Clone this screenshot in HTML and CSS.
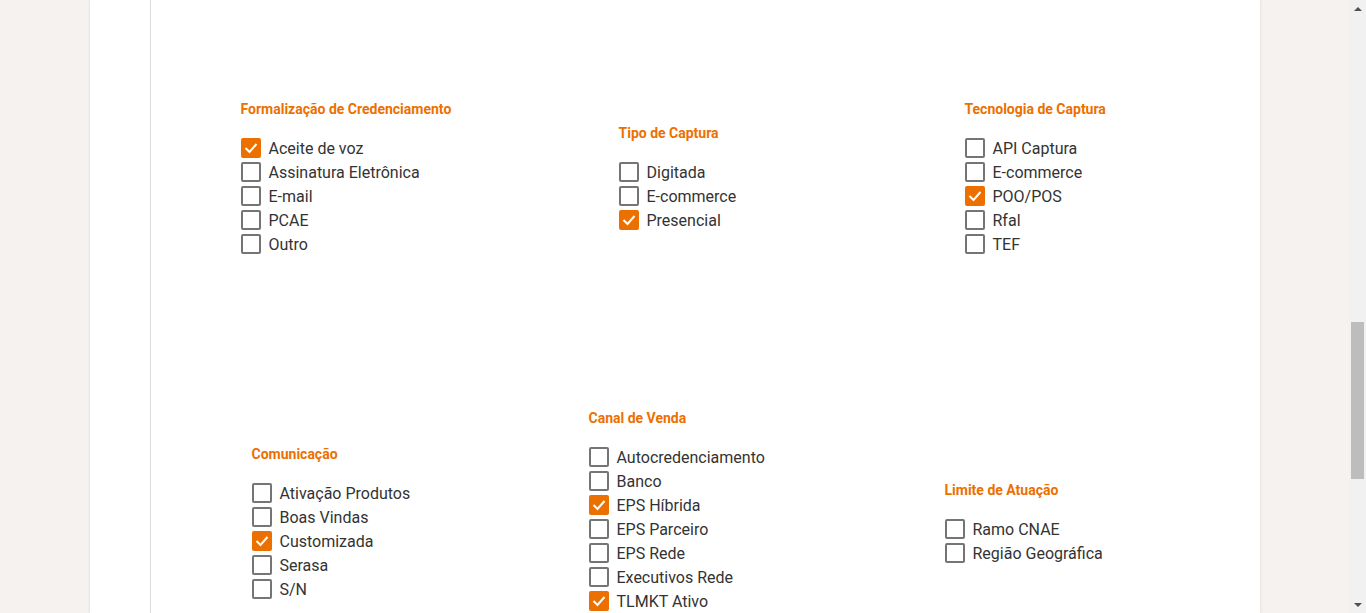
FILE: index.html
```html
<!DOCTYPE html>
<html lang="pt-BR">
<head>
<meta charset="utf-8">
<title>Filtros</title>
<link rel="stylesheet" href="styles.css">
</head>
<body>
<div class="screen">
  <div class="viewport">
    <div class="panel">
      <div class="rail"></div>
      <div class="content">
        <div class="row row-top">
          <div class="group">
            <div class="group-title">Formalização de Credenciamento</div>
            <label class="opt"><span class="box checked"><svg viewBox="0 0 20 20"><polyline points="4.5,10 8.5,14 15.5,6"/></svg></span>Aceite de voz</label>
            <label class="opt"><span class="box"></span>Assinatura Eletrônica</label>
            <label class="opt"><span class="box"></span>E-mail</label>
            <label class="opt"><span class="box"></span>PCAE</label>
            <label class="opt"><span class="box"></span>Outro</label>
          </div>
          <div class="group">
            <div class="group-title">Tipo de Captura</div>
            <label class="opt"><span class="box"></span>Digitada</label>
            <label class="opt"><span class="box"></span>E-commerce</label>
            <label class="opt"><span class="box checked"><svg viewBox="0 0 20 20"><polyline points="4.5,10 8.5,14 15.5,6"/></svg></span>Presencial</label>
          </div>
          <div class="group">
            <div class="group-title">Tecnologia de Captura</div>
            <label class="opt"><span class="box"></span>API Captura</label>
            <label class="opt"><span class="box"></span>E-commerce</label>
            <label class="opt"><span class="box checked"><svg viewBox="0 0 20 20"><polyline points="4.5,10 8.5,14 15.5,6"/></svg></span>POO/POS</label>
            <label class="opt"><span class="box"></span>Rfal</label>
            <label class="opt"><span class="box"></span>TEF</label>
          </div>
        </div>
        <div class="row row-bottom">
          <div class="group">
            <div class="group-title">Comunicação</div>
            <label class="opt"><span class="box"></span>Ativação Produtos</label>
            <label class="opt"><span class="box"></span>Boas Vindas</label>
            <label class="opt"><span class="box checked"><svg viewBox="0 0 20 20"><polyline points="4.5,10 8.5,14 15.5,6"/></svg></span>Customizada</label>
            <label class="opt"><span class="box"></span>Serasa</label>
            <label class="opt"><span class="box"></span>S/N</label>
          </div>
          <div class="group group-long">
            <div class="group-title">Canal de Venda</div>
            <label class="opt"><span class="box"></span>Autocredenciamento</label>
            <label class="opt"><span class="box"></span>Banco</label>
            <label class="opt"><span class="box checked"><svg viewBox="0 0 20 20"><polyline points="4.5,10 8.5,14 15.5,6"/></svg></span>EPS Híbrida</label>
            <label class="opt"><span class="box"></span>EPS Parceiro</label>
            <label class="opt"><span class="box"></span>EPS Rede</label>
            <label class="opt"><span class="box"></span>Executivos Rede</label>
            <label class="opt"><span class="box checked"><svg viewBox="0 0 20 20"><polyline points="4.5,10 8.5,14 15.5,6"/></svg></span>TLMKT Ativo</label>
          </div>
          <div class="group">
            <div class="group-title">Limite de Atuação</div>
            <label class="opt"><span class="box"></span>Ramo CNAE</label>
            <label class="opt"><span class="box"></span>Região Geográfica</label>
          </div>
        </div>
      </div>
    </div>
  </div>
  <div class="scrollbar">
    <div class="sb-btn"><span class="arrow-up"></span></div>
    <div class="sb-track"><div class="sb-thumb"></div></div>
    <div class="sb-btn"><span class="arrow-down"></span></div>
  </div>
</div>
</body>
</html>
```

FILE: styles.css
```css
html, body {
  margin: 0;
  padding: 0;
}

body {
  background: #f5f2ef;
  font-family: Roboto, "Liberation Sans", Arial, sans-serif;
  color: #333333;
  overflow: hidden;
}

.screen {
  display: flex;
  height: 613px;
  overflow: hidden;
}

.viewport {
  flex: 1;
  display: flex;
  justify-content: center;
  overflow: hidden;
}

.panel {
  width: 1170px;
  flex: none;
  background: #ffffff;
  display: flex;
  box-shadow: 0 0 3px rgba(0, 0, 0, 0.12);
  align-self: stretch;
}

.rail {
  width: 60px;
  flex: none;
  border-right: 1px solid #dcdcdc;
}

.content {
  flex: 1;
  display: flex;
  flex-direction: column;
}

.row {
  display: grid;
  align-items: center;
  flex: none;
}

.row-top {
  height: 357px;
  padding-left: 90px;
  grid-template-columns: 378px 346px 1fr;
}

.row-bottom {
  height: 333px;
  padding-left: 101px;
  grid-template-columns: 337px 356px 1fr;
}

.group {
  display: flex;
  flex-direction: column;
}

.group-long {
  padding-bottom: 24px;
}

.group-title {
  font-size: 14px;
  font-weight: 700;
  line-height: 16px;
  color: #ec7000;
  margin-bottom: 19px;
  white-space: nowrap;
}

.opt {
  display: flex;
  align-items: center;
  gap: 8px;
  height: 24px;
  font-size: 16px;
  color: #333333;
  white-space: nowrap;
}

.box {
  width: 20px;
  height: 20px;
  box-sizing: border-box;
  border: 2px solid #757575;
  border-radius: 2px;
  flex: none;
  display: flex;
  align-items: center;
  justify-content: center;
}

.box.checked {
  background: #ec7000;
  border-color: #ec7000;
}

.box svg {
  width: 20px;
  height: 20px;
  flex: none;
}

.box svg polyline {
  fill: none;
  stroke: #ffffff;
  stroke-width: 2;
}

.scrollbar {
  width: 17px;
  flex: none;
  background: #f1f1f1;
  display: flex;
  flex-direction: column;
}

.sb-btn {
  height: 17px;
  flex: none;
  display: flex;
  align-items: center;
  justify-content: center;
}

.arrow-up {
  width: 0;
  height: 0;
  border-left: 4px solid transparent;
  border-right: 4px solid transparent;
  border-bottom: 4px solid #505050;
}

.arrow-down {
  width: 0;
  height: 0;
  border-left: 4px solid transparent;
  border-right: 4px solid transparent;
  border-top: 4px solid #505050;
}

.sb-track {
  flex: 1;
  display: flex;
  flex-direction: column;
  align-items: center;
}

.sb-thumb {
  width: 13px;
  height: 157px;
  margin-top: 305px;
  background: #bdbdbd;
}
```
